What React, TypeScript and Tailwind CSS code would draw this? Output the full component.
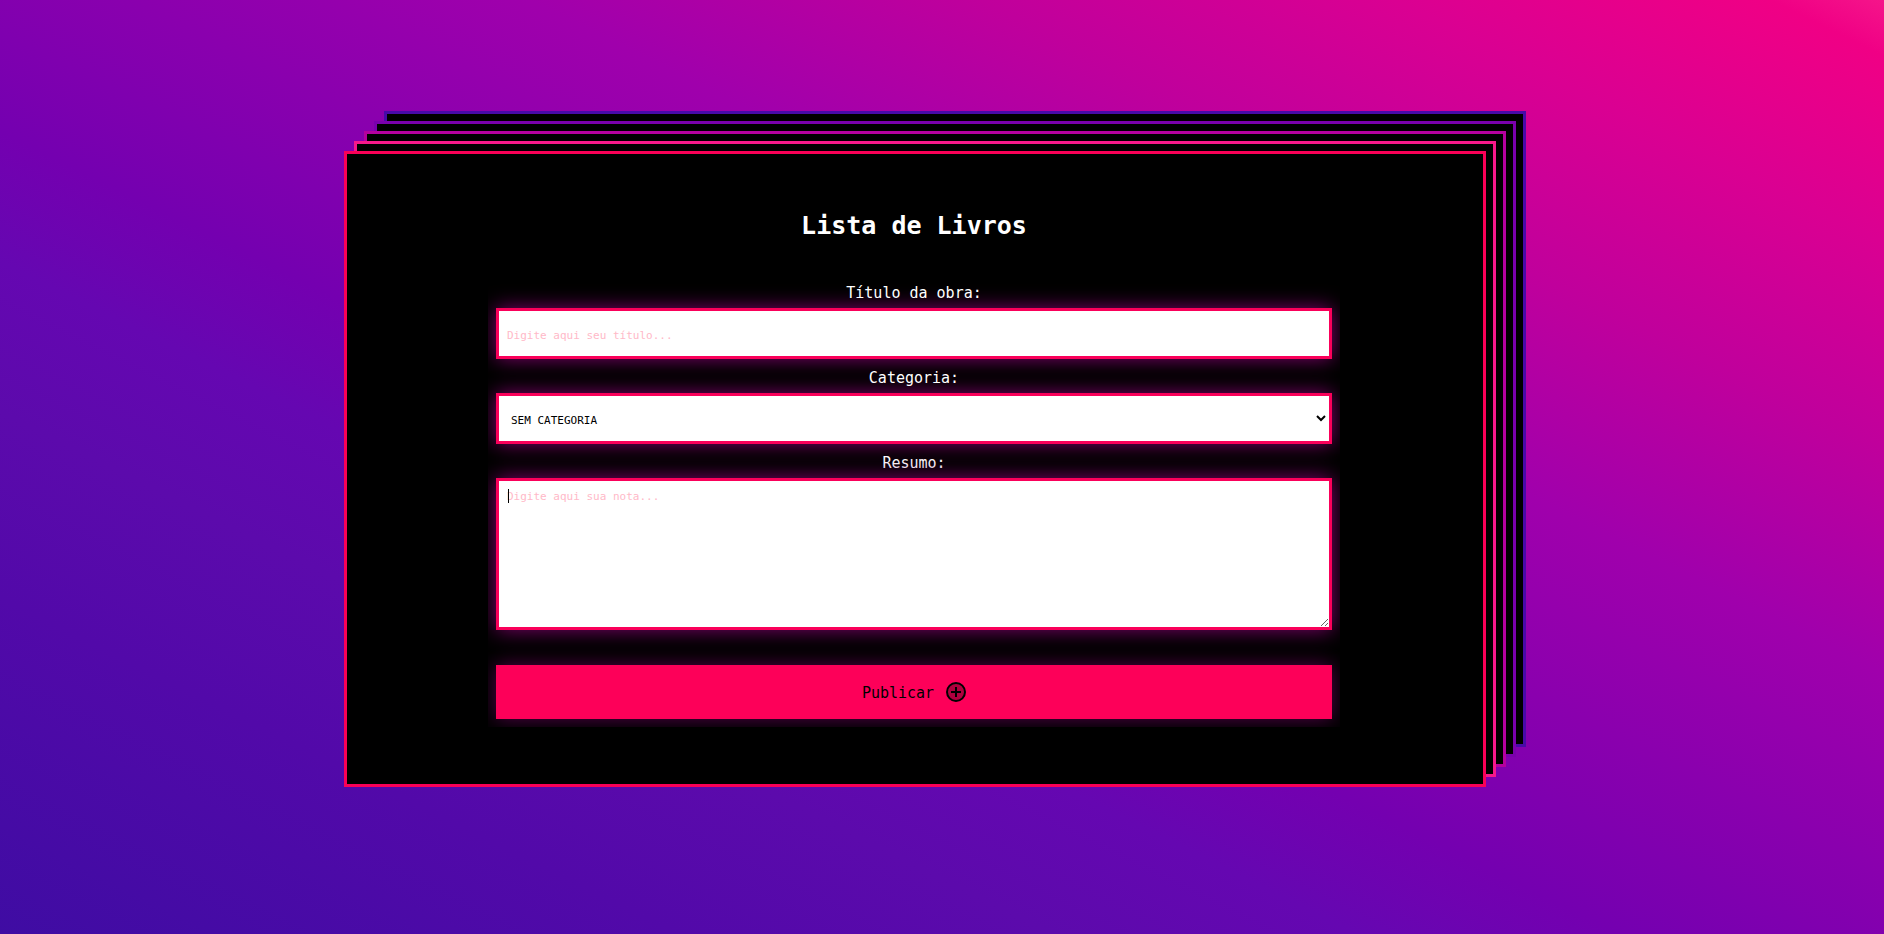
const field =
  "block w-full border-[3px] border-[#fa005a] bg-white px-2 text-[11px] text-black shadow-[0_0_20px_#82006e] outline-none placeholder:text-[#ffb9c8] placeholder:opacity-100";
const label = "mb-[5px] block text-center text-[15px] leading-5 text-white";

function PlusCircleIcon() {
  return (
    <svg viewBox="0 0 20 20" className="size-5" fill="none" stroke="currentColor" strokeWidth="2" aria-hidden="true">
      <circle cx="10" cy="10" r="9" fill="#000" fillOpacity="0.3" />
      <path d="M5 10h10M10 5v10" />
    </svg>
  );
}

export default function App() {
  return (
    <main className="flex min-h-screen items-start justify-center bg-[linear-gradient(to_top_right,#3f0ca3_0%,#5209a9_18%,#5c0aac_28%,#6507b1_36%,#7400b0_43%,#a000ac_64%,#c0009c_76%,#da0092_87%,#f00085_97%,#f5158a_100%)] pt-[151px] pr-[78px] pb-16 pl-6 font-['DejaVu_Sans_Mono',monospace]">
      <section className="w-full max-w-[1142px] border-[3px] border-[#fa0057] bg-black pt-[57px] pr-[143px] pb-[57px] pl-[141px] shadow-[10px_-10px_0_-3px_#000,10px_-10px_0_0_#f7188a,20px_-20px_0_-3px_#000,20px_-20px_0_0_#b5009e,30px_-30px_0_-3px_#000,30px_-30px_0_0_#7a00ac,40px_-40px_0_-3px_#000,40px_-40px_0_0_#480aa8]">
        <h1 className="text-center text-[25px] leading-[30px] font-bold text-white">Lista de Livros</h1>
        <form className="mt-4 overflow-hidden px-2 pt-[26px] pb-2" onSubmit={(e) => e.preventDefault()}>
          <div className="mb-[9px]">
            <label htmlFor="titulo" className={label}>Título da obra:</label>
            <input id="titulo" type="text" placeholder="Digite aqui seu título..." className={`${field} h-[51px] pt-[3px]`} />
          </div>
          <div className="mb-[9px]">
            <label htmlFor="categoria" className={label}>Categoria:</label>
            <select id="categoria" className={`${field} h-[51px] pt-[3px]`}>
              <option>SEM CATEGORIA</option>
            </select>
          </div>
          <div>
            <label htmlFor="resumo" className={label}>Resumo:</label>
            <div className="relative">
              <textarea id="resumo" placeholder="Digite aqui sua nota..." className={`${field} h-[152px] resize py-2 leading-4 caret-transparent`} />
              <span className="pointer-events-none absolute top-[11px] left-3 h-[14px] w-px bg-black" />
            </div>
          </div>
          <button type="submit" className="mt-[35px] flex h-[54px] w-full items-center justify-center gap-3 bg-[#fd0059] text-[15px] text-black shadow-[0_0_20px_#55004a]">
            <span className="pt-[3px]">Publicar</span>
            <PlusCircleIcon />
          </button>
        </form>
      </section>
    </main>
  );
}
